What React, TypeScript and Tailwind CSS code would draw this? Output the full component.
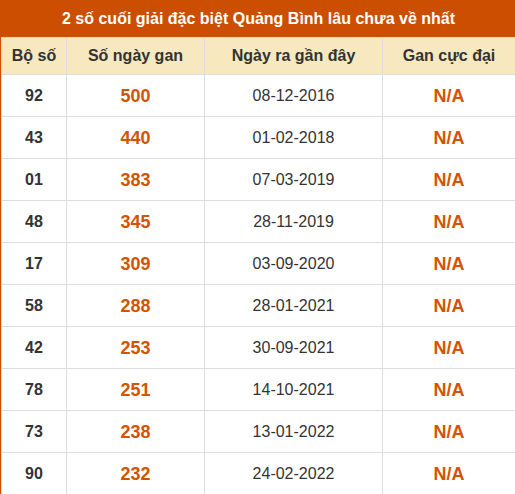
const rows = [
  { so: '92', gan: '500', ngay: '08-12-2016' },
  { so: '43', gan: '440', ngay: '01-02-2018' },
  { so: '01', gan: '383', ngay: '07-03-2019' },
  { so: '48', gan: '345', ngay: '28-11-2019' },
  { so: '17', gan: '309', ngay: '03-09-2020' },
  { so: '58', gan: '288', ngay: '28-01-2021' },
  { so: '42', gan: '253', ngay: '30-09-2021' },
  { so: '78', gan: '251', ngay: '14-10-2021' },
  { so: '73', gan: '238', ngay: '13-01-2022' },
  { so: '90', gan: '232', ngay: '24-02-2022' },
];

export default function App() {
  return (
    <div className="w-[517px] bg-white font-['Liberation_Sans',Arial,sans-serif] text-[#333]">
      <div className="border border-[#cc4e00]">
        <div className="flex h-9 items-center justify-center bg-[#cc4e00] text-base font-bold text-white">
          2 số cuối giải đặc biệt Quảng Bình lâu chưa về nhất
        </div>
        <table className="w-full table-fixed border-collapse text-center">
          <colgroup>
            <col className="w-[65px]" />
            <col className="w-[138px]" />
            <col className="w-[178px]" />
            <col />
          </colgroup>
          <thead>
            <tr className="h-[37px] bg-[#f7e8bf] text-base font-bold">
              <th className="border border-[#ddd]">Bộ số</th>
              <th className="border border-[#ddd]">Số ngày gan</th>
              <th className="border border-[#ddd]">Ngày ra gần đây</th>
              <th className="border border-[#ddd]">Gan cực đại</th>
            </tr>
          </thead>
          <tbody>
            {rows.map(r => (
              <tr key={r.so} className="h-[42px]">
                <td className="border border-[#ddd] text-base font-bold">{r.so}</td>
                <td className="border border-[#ddd] text-lg font-bold text-[#d35400]">{r.gan}</td>
                <td className="border border-[#ddd] text-base">{r.ngay}</td>
                <td className="border border-[#ddd] text-lg font-bold text-[#d35400]">N/A</td>
              </tr>
            ))}
          </tbody>
        </table>
      </div>
    </div>
  );
}
